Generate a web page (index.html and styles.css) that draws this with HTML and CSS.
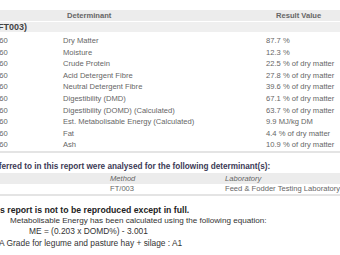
FILE: index.html
```html
<!DOCTYPE html>
<html>
<head>
<meta charset="utf-8">
<link rel="stylesheet" href="styles.css">
</head>
<body>
<div class="page">
  <table class="results">
    <thead>
      <tr class="head">
        <th class="c-id"></th>
        <th class="c-det">Determinant</th>
        <th class="c-val">Result Value</th>
      </tr>
    </thead>
    <tbody>
      <tr class="group"><td colspan="3">(FT003)</td></tr>
      <tr><td class="c-id">160</td><td class="c-det">Dry Matter</td><td class="c-val">87.7 %</td></tr>
      <tr><td class="c-id">160</td><td class="c-det">Moisture</td><td class="c-val">12.3 %</td></tr>
      <tr><td class="c-id">160</td><td class="c-det">Crude Protein</td><td class="c-val">22.5 % of dry matter</td></tr>
      <tr><td class="c-id">160</td><td class="c-det">Acid Detergent Fibre</td><td class="c-val">27.8 % of dry matter</td></tr>
      <tr><td class="c-id">160</td><td class="c-det">Neutral Detergent Fibre</td><td class="c-val">39.6 % of dry matter</td></tr>
      <tr><td class="c-id">160</td><td class="c-det">Digestibility (DMD)</td><td class="c-val">67.1 % of dry matter</td></tr>
      <tr><td class="c-id">160</td><td class="c-det">Digestibility (DOMD) (Calculated)</td><td class="c-val">63.7 % of dry matter</td></tr>
      <tr><td class="c-id">160</td><td class="c-det">Est. Metabolisable Energy (Calculated)</td><td class="c-val">9.9 MJ/kg DM</td></tr>
      <tr><td class="c-id">160</td><td class="c-det">Fat</td><td class="c-val">4.4 % of dry matter</td></tr>
      <tr><td class="c-id">160</td><td class="c-det">Ash</td><td class="c-val">10.9 % of dry matter</td></tr>
    </tbody>
  </table>

  <p class="intro">Samples referred to in this report were analysed for the following determinant(s):</p>

  <table class="methods">
    <thead>
      <tr class="head">
        <th class="m-a"></th>
        <th class="m-method">Method</th>
        <th class="m-lab">Laboratory</th>
      </tr>
    </thead>
    <tbody>
      <tr><td class="m-a"></td><td class="m-method">FT/003</td><td class="m-lab">Feed &amp; Fodder Testing Laboratory</td></tr>
    </tbody>
  </table>

  <p class="notice">This report is not to be reproduced except in full.</p>

  <div class="notes">
    <p class="note1">Metabolisable Energy has been calculated using the following equation:</p>
    <p class="note2">ME = (0.203 x DOMD%) - 3.001</p>
    <p class="note3">FVA Grade for legume and pasture hay + silage : A1</p>
  </div>
</div>
</body>
</html>
```

FILE: styles.css
```css
html, body {
  margin: 0;
  padding: 0;
  background: #ffffff;
  overflow: hidden;
}
body {
  width: 340px;
  height: 255px;
  font-family: "Liberation Sans", Arial, sans-serif;
  color: #666666;
}
.page {
  margin-left: -60px;
  width: 420px;
  padding-top: 10px;
}
table {
  border-collapse: collapse;
  width: 100%;
  font-size: 7.6px;
}
.results .head th {
  background: #ececec;
  height: 11px;
  font-weight: bold;
  color: #666;
  text-align: left;
  padding: 0;
}
.results th.c-det { padding-left: 4px; }
.results th.c-val { padding-left: 10px; }
.results .group td {
  background: #efefef;
  height: 10px;
  line-height: 10px;
  font-weight: bold;
  color: #444;
  font-size: 9px;
  padding: 0 0 0 55px;
  border-top: 1px solid #fff;
}
.results tbody tr td {
  height: 11.6px;
  padding: 0;
  line-height: 11.6px;
}
.results tbody tr:nth-child(2) td { padding-top: 3px; }
.c-id { width: 123px; padding-left: 55px !important; box-sizing: border-box; }
.c-det { width: 199px; }
.results tbody tr:last-child td { border-bottom: 2px solid #e4e4e4; height: 11px; }

.intro {
  margin: 0;
  padding: 9px 0 2px 15px;
  font-size: 8.2px;
  font-weight: bold;
  color: #3c3a55;
}
.methods .head th {
  background: #ececec;
  height: 11px;
  font-weight: normal;
  font-style: italic;
  text-align: left;
  padding: 0;
}
.methods td {
  height: 10px;
  padding: 0;
  border-bottom: 2px solid #e4e4e4;
}
.m-a { width: 170px; }
.m-method { width: 115px; }

.notice {
  margin: 0;
  padding: 9px 0 0 47px;
  font-size: 8.7px;
  font-weight: bold;
  color: #222;
}
.notes {
  font-size: 8.4px;
  color: #333;
}
.notes p { margin: 0; line-height: 11.5px; }
.note1 { padding-left: 70px; font-size: 8.1px; }
.note2 { padding-left: 89px; }
.note3 { padding-left: 49px; }
```
